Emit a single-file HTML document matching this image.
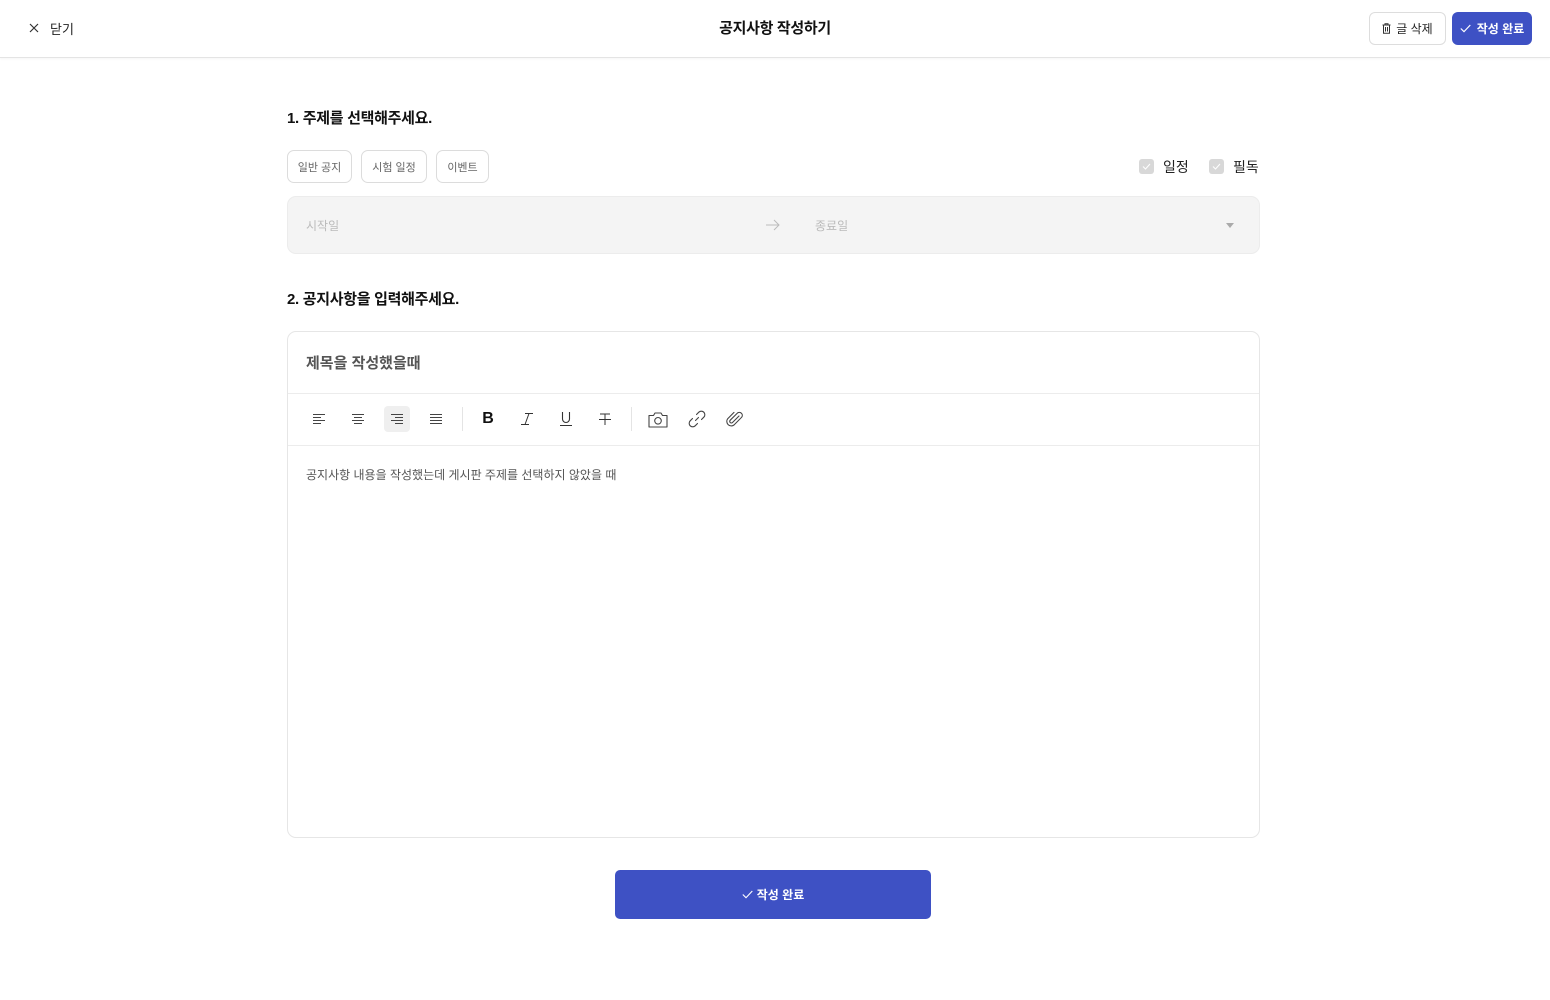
<!DOCTYPE html>
<html><head><meta charset="utf-8"><style>
*{box-sizing:border-box;margin:0;padding:0}
body{width:1550px;height:1000px;background:#fff;font-family:"Liberation Sans","Noto Sans CJK KR",sans-serif;color:#222;position:relative;overflow:hidden}
.abs{position:absolute}
.hdr{left:0;top:0;width:1550px;height:58px;border-bottom:1px solid #e4e4e4;box-shadow:0 1px 2px rgba(0,0,0,.04)}
.chip{position:absolute;top:150px;height:33px;border:1px solid #dcdcdc;border-radius:7px;font-size:11px;color:#666;display:flex;align-items:center;justify-content:center}
.h2{font-size:15px;font-weight:700;color:#111;letter-spacing:-0.3px}
.ti{position:absolute;top:407px;width:24px;height:24px;display:flex;align-items:center;justify-content:center}
.cb{position:absolute;top:159px;width:15px;height:15px;background:#d8d8d8;border-radius:3px}
</style></head><body>
<div class="abs hdr"></div>
<svg class="abs" style="left:29px;top:23px" width="10" height="10" viewBox="0 0 10 10"><path d="M1 1L9 9M9 1L1 9" stroke="#333" stroke-width="1.2"/></svg>
<div class="abs" style="left:50px;top:19px;font-size:13px;color:#222">닫기</div>
<div class="abs" style="left:0;width:1550px;top:17px;text-align:center;font-size:15px;font-weight:700;color:#111;letter-spacing:-0.3px">공지사항 작성하기</div>
<div class="abs" style="left:1369px;top:12px;width:77px;height:33px;border:1px solid #ddd;border-radius:6px;font-size:12px;color:#222;display:flex;align-items:center;justify-content:center;gap:5px">
<svg width="9" height="11" viewBox="0 0 9 11"><path d="M0.5 2H8.5M3 2V0.8H6V2M1.5 2V10.3H7.5V2M3.5 4V8.5M5.5 4V8.5" fill="none" stroke="#333" stroke-width="1"/></svg>글 삭제</div>
<div class="abs" style="left:1452px;top:12px;width:80px;height:33px;background:#3e51c4;border-radius:6px;font-size:12px;color:#fff;font-weight:700;display:flex;align-items:center;justify-content:center;gap:6px">
<svg width="11" height="9" viewBox="0 0 11 9"><path d="M0.8 4.5L4 7.7L10.3 1" fill="none" stroke="#fff" stroke-width="1.2"/></svg>작성 완료</div>

<div class="abs h2" style="left:287px;top:107px">1. 주제를 선택해주세요.</div>
<div class="chip" style="left:287px;width:65px">일반 공지</div>
<div class="chip" style="left:361px;width:66px">시험 일정</div>
<div class="chip" style="left:436px;width:53px">이벤트</div>
<div class="cb" style="left:1139px"></div>
<svg class="abs" style="left:1142px;top:163px" width="9" height="7" viewBox="0 0 9 7"><path d="M1 3.5L3.5 6L8 1" fill="none" stroke="#fff" stroke-width="1"/></svg>
<div class="abs" style="left:1163px;top:157px;font-size:14px;color:#222">일정</div>
<div class="cb" style="left:1209px"></div>
<svg class="abs" style="left:1212px;top:163px" width="9" height="7" viewBox="0 0 9 7"><path d="M1 3.5L3.5 6L8 1" fill="none" stroke="#fff" stroke-width="1"/></svg>
<div class="abs" style="left:1233px;top:157px;font-size:14px;color:#222">필독</div>

<div class="abs" style="left:287px;top:196px;width:973px;height:58px;background:#f4f4f4;border:1px solid #ececec;border-radius:9px"></div>
<div class="abs" style="left:306px;top:217px;font-size:12px;color:#bbb">시작일</div>
<svg class="abs" style="left:766px;top:219px" width="14" height="12" viewBox="0 0 14 12"><path d="M0 6H13M8 1L13 6L8 11" fill="none" stroke="#bbb" stroke-width="1"/></svg>
<div class="abs" style="left:815px;top:217px;font-size:12px;color:#bbb">종료일</div>
<svg class="abs" style="left:1226px;top:223px" width="8" height="5" viewBox="0 0 8 5"><path d="M0 0H8L4 5Z" fill="#aaa"/></svg>

<div class="abs h2" style="left:287px;top:288px">2. 공지사항을 입력해주세요.</div>
<div class="abs" style="left:287px;top:331px;width:973px;height:507px;border:1px solid #e6e6e6;border-radius:9px"></div>
<div class="abs" style="left:306px;top:352px;font-size:15px;font-weight:700;color:#555">제목을 작성했을때</div>
<div class="abs" style="left:288px;top:393px;width:971px;height:1px;background:#ececec"></div>
<div class="abs" style="left:288px;top:445px;width:971px;height:1px;background:#ececec"></div>
<div class="abs" style="left:384px;top:406px;width:26px;height:26px;background:#efefef;border-radius:4px"></div>
<div class="abs" style="left:462px;top:407px;width:1px;height:24px;background:#e4e4e4"></div>
<div class="abs" style="left:631px;top:407px;width:1px;height:24px;background:#e4e4e4"></div>
<div class="ti" style="left:307px"><svg width="14" height="12" viewBox="0 0 14 12"><path d="M1 1.5H13M1 4.5H9M1 7.5H13M1 10.5H9" stroke="#444" stroke-width="1"/></svg></div>
<div class="ti" style="left:346px"><svg width="14" height="12" viewBox="0 0 14 12"><path d="M1 1.5H13M3 4.5H11M1 7.5H13M3 10.5H11" stroke="#444" stroke-width="1"/></svg></div>
<div class="ti" style="left:385px"><svg width="14" height="12" viewBox="0 0 14 12"><path d="M1 1.5H13M5 4.5H13M1 7.5H13M5 10.5H13" stroke="#444" stroke-width="1"/></svg></div>
<div class="ti" style="left:424px"><svg width="14" height="12" viewBox="0 0 14 12"><path d="M1 1.5H13M1 4.5H13M1 7.5H13M1 10.5H13" stroke="#444" stroke-width="1"/></svg></div>
<div class="ti" style="left:476px;font-size:16px;font-weight:700;color:#111">B</div>
<div class="ti" style="left:515px"><svg width="14" height="14" viewBox="0 0 14 14"><path d="M5 1.5H13M1 12.5H9M9 1.5L5 12.5" stroke="#333" stroke-width="1"/></svg></div>
<div class="ti" style="left:554px"><svg width="14" height="16" viewBox="0 0 14 16"><path d="M3.5 1V8a3.5 3.5 0 0 0 7 0V1M1 14.5H13" fill="none" stroke="#333" stroke-width="1.1"/></svg></div>
<div class="ti" style="left:593px"><svg width="14" height="14" viewBox="0 0 14 14"><path d="M2 2H12M7 2V13M1 7.5H13" stroke="#333" stroke-width="1"/></svg></div>
<div class="ti" style="left:646px"><svg width="20" height="17" viewBox="0 0 20 17"><path d="M1 4.5H5.5L7 2H13L14.5 4.5H19V16H1Z" fill="none" stroke="#444" stroke-width="1.1" stroke-linejoin="round"/><circle cx="10" cy="9.8" r="3.3" fill="none" stroke="#444" stroke-width="1.1"/></svg></div>
<div class="ti" style="left:685px"><svg width="18" height="18" viewBox="0 0 18 18"><path d="M7.5 10.5L10.5 7.5M8.5 4.5L10.8 2.2a3 3 0 0 1 5 5L13.5 9.5M9.5 13.5L7.2 15.8a3 3 0 0 1-5-5L4.5 8.5" fill="none" stroke="#444" stroke-width="1.1" stroke-linecap="round"/></svg></div>
<div class="ti" style="left:723px"><svg width="18" height="18" viewBox="0 0 18 18"><path d="M13 6L6.5 12.5a1.6 1.6 0 0 1-2.3-2.3L11.5 3a3 3 0 0 1 4.2 4.2L8 15a4.5 4.5 0 0 1-6.3-6.3L8 2.4" fill="none" stroke="#444" stroke-width="1.1" stroke-linecap="round"/></svg></div>
<div class="abs" style="left:306px;top:466px;font-size:12px;color:#555">공지사항 내용을 작성했는데 게시판 주제를 선택하지 않았을 때</div>

<div class="abs" style="left:615px;top:870px;width:316px;height:49px;background:#3e51c4;border-radius:5px;color:#fff;font-size:12px;font-weight:700;display:flex;align-items:center;justify-content:center;gap:4px">
<svg width="11" height="9" viewBox="0 0 11 9"><path d="M0.8 4.5L4 7.7L10.3 1" fill="none" stroke="#fff" stroke-width="1.1"/></svg>작성 완료</div>
</body></html>
